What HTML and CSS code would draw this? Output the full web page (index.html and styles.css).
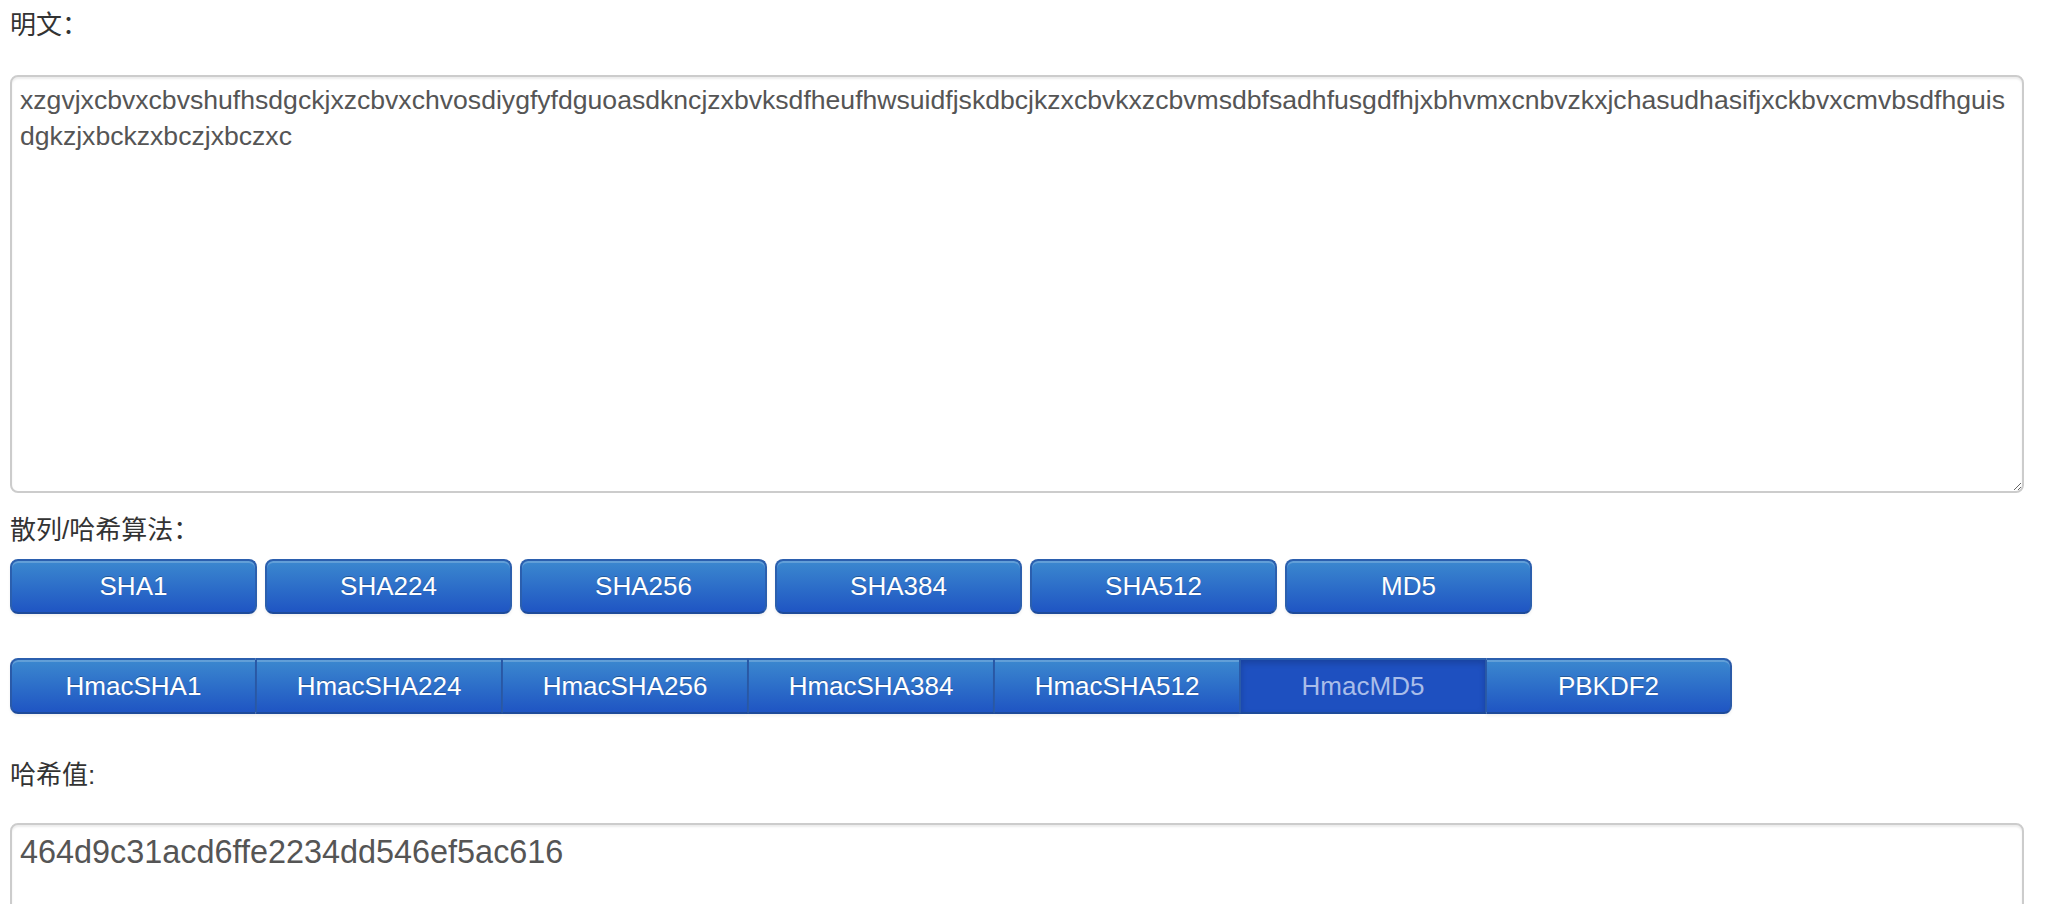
FILE: index.html
```html
<!DOCTYPE html>
<html lang="zh-CN">
<head>
<meta charset="utf-8">
<title>Hash</title>
<link rel="stylesheet" href="styles.css">
</head>
<body>
<div class="page">
  <div class="label label-plain">明文：</div>
  <textarea class="input-area plain">xzgvjxcbvxcbvshufhsdgckjxzcbvxchvosdiygfyfdguoasdkncjzxbvksdfheufhwsuidfjskdbcjkzxcbvkxzcbvmsdbfsadhfusgdfhjxbhvmxcnbvzkxjchasudhasifjxckbvxcmvbsdfhguis
dgkzjxbckzxbczjxbczxc</textarea>
  <div class="label label-algo">散列/哈希算法：</div>
  <div class="btn-row">
    <button class="btn">SHA1</button>
    <button class="btn">SHA224</button>
    <button class="btn">SHA256</button>
    <button class="btn">SHA384</button>
    <button class="btn">SHA512</button>
    <button class="btn">MD5</button>
  </div>
  <div class="btn-group">
    <button class="btn seg">HmacSHA1</button>
    <button class="btn seg">HmacSHA224</button>
    <button class="btn seg">HmacSHA256</button>
    <button class="btn seg">HmacSHA384</button>
    <button class="btn seg">HmacSHA512</button>
    <button class="btn seg active">HmacMD5</button>
    <button class="btn seg">PBKDF2</button>
  </div>
  <div class="label label-hash">哈希值:</div>
  <textarea class="input-area hash" readonly>464d9c31acd6ffe2234dd546ef5ac616</textarea>
</div>
</body>
</html>
```
FILE: styles.css
```css
html, body {
  margin: 0;
  padding: 0;
  background: #ffffff;
}

body {
  font-family: "Liberation Sans", Arial, "Noto Sans CJK SC", sans-serif;
  color: #333333;
  overflow: hidden;
}

.page {
  display: flex;
  flex-direction: column;
  align-items: flex-start;
  padding: 5px 22px 0 10px;
}

.label {
  font-size: 26px;
  line-height: 40px;
  height: 40px;
  color: #333333;
}

.label-plain {
  margin-top: 0;
}

.input-area {
  box-sizing: border-box;
  display: block;
  width: 2014px;
  margin: 0;
  border: 2px solid #cccccc;
  border-radius: 8px;
  box-shadow: inset 0 2px 2px rgba(0, 0, 0, 0.075);
  padding: 5px 6px 5px 8px;
  font-family: "Liberation Sans", Arial, sans-serif;
  color: #555555;
  background: #ffffff;
  outline: none;
}

.plain {
  margin-top: 30px;
  height: 418px;
  font-size: 26.6px;
  line-height: 36px;
  white-space: pre-wrap;
}

.label-algo {
  margin-top: 17px;
}

.btn-row {
  display: flex;
  gap: 8px;
  margin-top: 9px;
}

.btn {
  box-sizing: border-box;
  width: 247px;
  height: 55px;
  margin: 0;
  padding: 0;
  font-family: "Liberation Sans", Arial, sans-serif;
  font-size: 26px;
  color: #ffffff;
  text-shadow: 0 -1px 0 rgba(0, 0, 0, 0.25);
  background: linear-gradient(#3b88cf, #1f55c3);
  border: 2px solid #2b5fae;
  border-bottom-color: #1e4b9a;
  border-radius: 8px;
  box-shadow: inset 0 2px 0 rgba(255, 255, 255, 0.2), 0 2px 3px rgba(0, 0, 0, 0.06);
  cursor: pointer;
}

.btn-group {
  display: flex;
  margin-top: 44px;
}

.seg {
  width: 246px;
  height: 56px;
  border-radius: 0;
  border-left-width: 1px;
  border-right-width: 1px;
  border-left-color: #2a5aa8;
  border-right-color: #2a5aa8;
}

.seg:first-child {
  border-left-width: 2px;
  border-radius: 8px 0 0 8px;
}

.seg:last-child {
  border-right-width: 2px;
  border-radius: 0 8px 8px 0;
}

.seg.active {
  background: #1e50c0;
  color: #a9bde9;
  text-shadow: none;
  box-shadow: inset 0 3px 6px rgba(0, 0, 0, 0.18);
}

.label-hash {
  margin-top: 41px;
}

.hash {
  margin-top: 28px;
  height: 220px;
  font-size: 32.4px;
  line-height: 44px;
  resize: none;
}
```
